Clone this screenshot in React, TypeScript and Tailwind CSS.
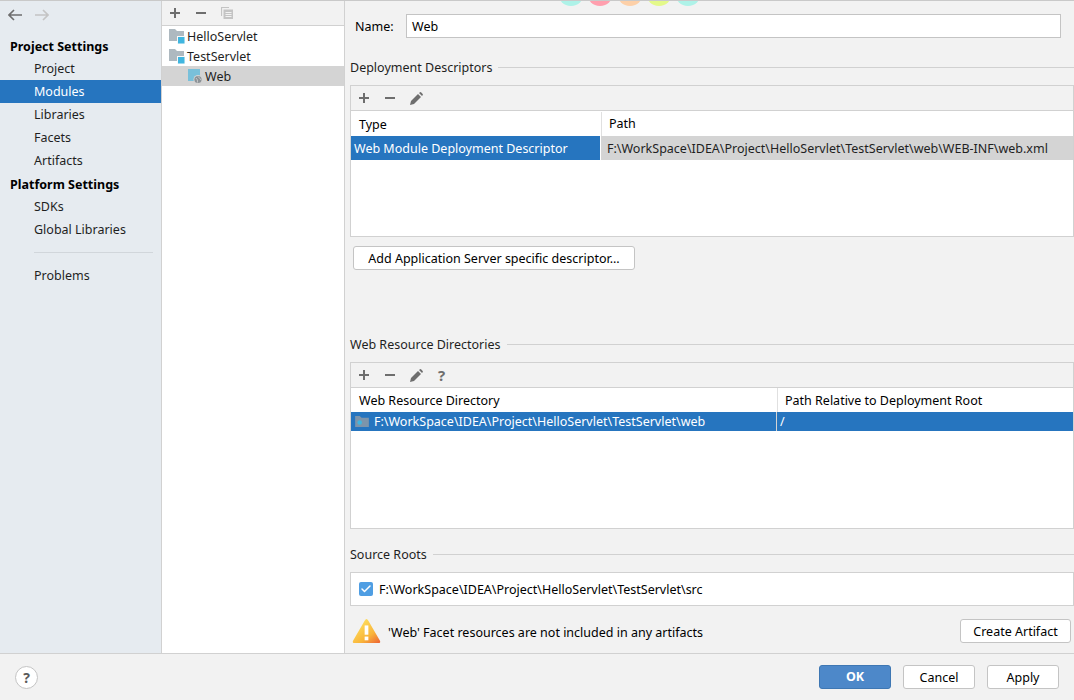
import { Check } from 'lucide-react'

const FONT = '"Noto Sans", "Open Sans", sans-serif'

function PlusIcon() {
  return (
    <svg width="10" height="10" viewBox="0 0 10 10" fill="#6e6e6e" className="shrink-0">
      <rect x="0" y="4" width="10" height="2" />
      <rect x="4" y="0" width="2" height="10" />
    </svg>
  )
}

function MinusIcon() {
  return (
    <svg width="10" height="10" viewBox="0 0 10 10" fill="#6e6e6e" className="shrink-0">
      <rect x="0" y="4" width="10" height="2" />
    </svg>
  )
}

function PencilIcon() {
  return (
    <svg width="13" height="13" viewBox="0 0 13 13" fill="#6e6e6e" className="-ml-px shrink-0">
      <path d="M0 13 L1 9 L8 2 L11 5 L4 12 Z" />
      <path d="M9 1 L10 0.2 Q10.5 0 11 0.3 L12.7 2 Q13 2.5 12.8 3 L12 4 Z" />
    </svg>
  )
}

function CopyIcon() {
  return (
    <svg width="12" height="12" viewBox="0 0 12 12" fill="none" stroke="#c4c4c4" className="-ml-px shrink-0">
      <path d="M0.5 9 V0.5 H8" strokeWidth="1.2" />
      <rect x="2.5" y="2.5" width="9.5" height="9.5" fill="#c4c4c4" stroke="none" />
      <path d="M4.5 5.5 H10.5 M4.5 7.5 H10.5 M4.5 9.5 H10.5" stroke="#f2f2f2" strokeWidth="1" />
    </svg>
  )
}

function ModuleFolder() {
  return (
    <svg width="16" height="15" viewBox="0 0 16 15" className="shrink-0">
      <path d="M0 0 H6 L8 2 H15 V12 H0 Z" fill="#aeb9c0" />
      <rect x="8" y="7" width="8" height="8" fill="#f9f9f9" />
      <rect x="9" y="8" width="6.5" height="6.5" fill="#40b6e0" />
    </svg>
  )
}

function WebFacet() {
  return (
    <svg width="15" height="15" viewBox="0 0 15 15" className="shrink-0">
      <path d="M0 0 H12 V12 H0 Z" fill="#79c0da" />
      <circle cx="10" cy="10.5" r="4.5" fill="#d4d4d4" />
      <circle cx="10" cy="10.5" r="3.6" fill="#8c9297" />
      <path d="M8 9 Q10 10.5 9.5 13.5 M10 7.5 Q12 9.5 13 11" stroke="#d4d4d4" strokeWidth="0.8" fill="none" />
    </svg>
  )
}

function WarningIcon() {
  return (
    <svg width="29" height="26" viewBox="0 0 31 28" className="shrink-0">
      <defs>
        <linearGradient id="warn" x1="0.2" y1="0.2" x2="0.9" y2="1">
          <stop offset="0" stopColor="#fddc5c" />
          <stop offset="0.6" stopColor="#f9b53a" />
          <stop offset="1" stopColor="#ee6c35" />
        </linearGradient>
      </defs>
      <path d="M15.5 1 Q16.5 1 17.5 3 L30 24.5 Q31 27 28.5 27 H2.5 Q0 27 1 24.5 L13.5 3 Q14.5 1 15.5 1 Z" fill="url(#warn)" />
      <rect x="13.5" y="8" width="4" height="10" fill="#fff" />
      <rect x="13.5" y="20" width="4" height="4" fill="#fff" />
    </svg>
  )
}

function SideItem({ label, active }: { label: string; active?: boolean }) {
  return (
    <div className={`h-[23px] pl-[34px] leading-[23px] ${active ? 'bg-[#2675bf] text-white' : 'text-[#1f1f1f]'}`}>
      {label}
    </div>
  )
}

function SideHeading({ label }: { label: string }) {
  return <div className="h-[23px] pl-[10px] pt-px leading-[23px] font-bold text-black">{label}</div>
}

function SectionTitle({ label }: { label: string }) {
  return (
    <div className="flex h-[18px] items-center gap-[6px]">
      <span className="pt-[2px] leading-[18px] text-[#1f1f1f]">{label}</span>
      <div className="h-px flex-1 bg-[#d1d1d1]" />
    </div>
  )
}

function Button({ label, className }: { label: string; className: string }) {
  return (
    <button className={`flex h-[24px] items-center justify-center rounded-[3px] border border-[#c4c4c4] bg-white pt-[2px] text-black ${className}`}>
      {label}
    </button>
  )
}

const dots = ['bg-[#aef2e8]', 'bg-[#ff9fae]', 'bg-[#fdd0a8]', 'bg-[#e4f98a]', 'bg-[#aef2e8]']

export default function App() {
  return (
    <div
      className="relative flex h-[700px] w-[1074px] flex-col overflow-hidden bg-[#f2f2f2] text-[12.5px] text-black"
      style={{ fontFamily: FONT }}
    >
      <div className="flex h-[654px] border-b border-[#d1d1d1] border-t border-t-[#c9c9c9]">
        {/* Sidebar */}
        <aside className="w-[162px] shrink-0 border-r border-[#d1d1d1] bg-[#e6ebf0]">
          <div className="flex h-[33px] items-center gap-[13px] pl-[8px] pb-[5px]">
            <svg width="14" height="12" viewBox="0 0 14 12" fill="none" stroke="#6e6e6e" strokeWidth="1.6">
              <path d="M14 6 H1.5 M6 1 L1 6 L6 11" />
            </svg>
            <svg width="14" height="12" viewBox="0 0 14 12" fill="none" stroke="#c4c4c4" strokeWidth="1.6">
              <path d="M0 6 H12.5 M8 1 L13 6 L8 11" />
            </svg>
          </div>
          <SideHeading label="Project Settings" />
          <SideItem label="Project" />
          <SideItem label="Modules" active />
          <SideItem label="Libraries" />
          <SideItem label="Facets" />
          <SideItem label="Artifacts" />
          <SideHeading label="Platform Settings" />
          <SideItem label="SDKs" />
          <SideItem label="Global Libraries" />
          <div className="my-[11px] ml-[34px] mr-[8px] h-px bg-[#d1d6db]" />
          <SideItem label="Problems" />
        </aside>

        {/* Module tree */}
        <section className="flex w-[183px] shrink-0 flex-col border-r border-[#d1d1d1] bg-white">
          <div className="flex h-[25px] shrink-0 items-center gap-[16px] border-b border-[#d1d1d1] bg-[#f2f2f2] pl-[8px]">
            <PlusIcon />
            <MinusIcon />
            <CopyIcon />
          </div>
          <div className="flex h-[20px] items-center gap-[2px] pl-[7px] text-[#1f1f1f]">
            <ModuleFolder />
            <span className="pt-[2px]">HelloServlet</span>
          </div>
          <div className="flex h-[20px] items-center gap-[2px] pl-[7px] text-[#1f1f1f]">
            <ModuleFolder />
            <span className="pt-[2px]">TestServlet</span>
          </div>
          <div className="flex h-[20px] items-center gap-[2px] bg-[#d4d4d4] pl-[26px] text-[#1f1f1f]">
            <WebFacet />
            <span className="pt-[2px]">Web</span>
          </div>
        </section>

        {/* Details */}
        <main className="min-w-0 flex-1 pl-[5px]">
          <div className="mt-[13px] flex h-[24px] items-center pl-[5px] pr-[13px]">
            <span className="w-[51px] shrink-0 pt-[2px]">Name:</span>
            <div className="flex h-[24px] flex-1 items-center border border-[#c4c4c4] bg-white pl-[5px] pt-[2px]">Web</div>
          </div>

          <div className="mt-[20px]">
            <SectionTitle label="Deployment Descriptors" />
          </div>
          <div className="mt-[9px] h-[152px] border border-[#d1d1d1] bg-white">
            <div className="flex h-[25px] items-center gap-[16px] border-b border-[#d1d1d1] bg-[#f2f2f2] pl-[8px]">
              <PlusIcon />
              <MinusIcon />
              <PencilIcon />
            </div>
            <div className="flex h-[25px] items-center">
              <div className="h-[24px] w-[251px] shrink-0 border-r border-[#e0e0e0] pl-[8px] pt-px leading-[24px]">Type</div>
              <div className="pl-[7px] pt-[2px]">Path</div>
            </div>
            <div className="flex h-[24px] items-center">
              <div className="h-[24px] w-[250px] shrink-0 border-r border-white bg-[#2675bf] pl-[3px] pt-px leading-[24px] text-white">
                Web Module Deployment Descriptor
              </div>
              <div className="h-[24px] flex-1 bg-[#d4d4d4] pl-[6px] pt-px leading-[24px] text-[#1f1f1f]">
                F:\WorkSpace\IDEA\Project\HelloServlet\TestServlet\web\WEB-INF\web.xml
              </div>
            </div>
          </div>
          <div className="ml-[3px] mt-[9px]">
            <Button label="Add Application Server specific descriptor..." className="w-[282px]" />
          </div>

          <div className="mt-[65px]">
            <SectionTitle label="Web Resource Directories" />
          </div>
          <div className="mt-[9px] h-[167px] border border-[#d1d1d1] bg-white">
            <div className="flex h-[25px] items-center gap-[16px] border-b border-[#d1d1d1] bg-[#f2f2f2] pl-[8px]">
              <PlusIcon />
              <MinusIcon />
              <PencilIcon />
              <span className="-ml-px text-[15px] font-bold leading-none text-[#6e6e6e]">?</span>
            </div>
            <div className="flex h-[24px] items-center">
              <div className="h-[24px] w-[427px] shrink-0 border-r border-[#e0e0e0] pl-[8px] pt-px leading-[24px]">Web Resource Directory</div>
              <div className="pl-[7px] pt-[2px]">Path Relative to Deployment Root</div>
            </div>
            <div className="flex h-[19px] items-center bg-[#2675bf] text-white">
              <div className="flex h-[19px] w-[426px] shrink-0 items-center gap-[5px] border-r border-[#d4d4d4] pl-[4px]">
                <svg width="14" height="11" viewBox="0 0 15 12" className="shrink-0">
                  <path d="M0 0 H5 L7 2 H15 V12 H0 Z" fill="#7d95ab" />
                  <circle cx="5" cy="7" r="2.5" fill="#40b6e0" />
                </svg>
                <span className="pt-[2px]">F:\WorkSpace\IDEA\Project\HelloServlet\TestServlet\web</span>
              </div>
              <div className="pl-[3px] pt-[2px]">/</div>
            </div>
          </div>

          <div className="mt-[16px]">
            <SectionTitle label="Source Roots" />
          </div>
          <div className="mt-[9px] flex h-[34px] items-center gap-[6px] border border-[#d1d1d1] bg-white pl-[8px]">
            <span className="flex h-[14px] w-[14px] items-center justify-center rounded-[2px] bg-[#4f9ee3]">
              <Check size={12} strokeWidth={3} color="#fff" />
            </span>
            <span className="pt-[2px]">F:\WorkSpace\IDEA\Project\HelloServlet\TestServlet\src</span>
          </div>

          <div className="mt-[10px] flex h-[30px] items-center pl-[2px] pr-[3px]">
            <WarningIcon />
            <span className="ml-[7px] flex-1 pt-[4px]">'Web' Facet resources are not included in any artifacts</span>
            <Button label="Create Artifact" className="w-[111px]" />
          </div>
        </main>
      </div>

      {/* Footer */}
      <footer className="flex flex-1 items-center pl-[15px] pr-[15px]">
        <div className="flex h-[23px] w-[23px] items-center justify-center rounded-full border border-[#c4c4c4] bg-white text-[14px] font-bold text-[#5a5a5a]">
          ?
        </div>
        <div className="ml-auto flex items-center gap-[12px]">
          <button className="flex h-[24px] w-[72px] items-center justify-center rounded-[3px] border border-[#3e77b3] bg-[#4d88c9] font-bold text-white">
            OK
          </button>
          <Button label="Cancel" className="w-[72px]" />
          <Button label="Apply" className="w-[72px]" />
        </div>
      </footer>

      {/* Desktop peeking through above the dialog */}
      <div className="absolute left-[558px] top-px flex h-[5px] gap-[3.3px] overflow-hidden">
        {dots.map((color, i) => (
          <div key={i} className={`-mt-[21px] h-[26px] w-[26px] shrink-0 rounded-full ${color}`} />
        ))}
      </div>
    </div>
  )
}
